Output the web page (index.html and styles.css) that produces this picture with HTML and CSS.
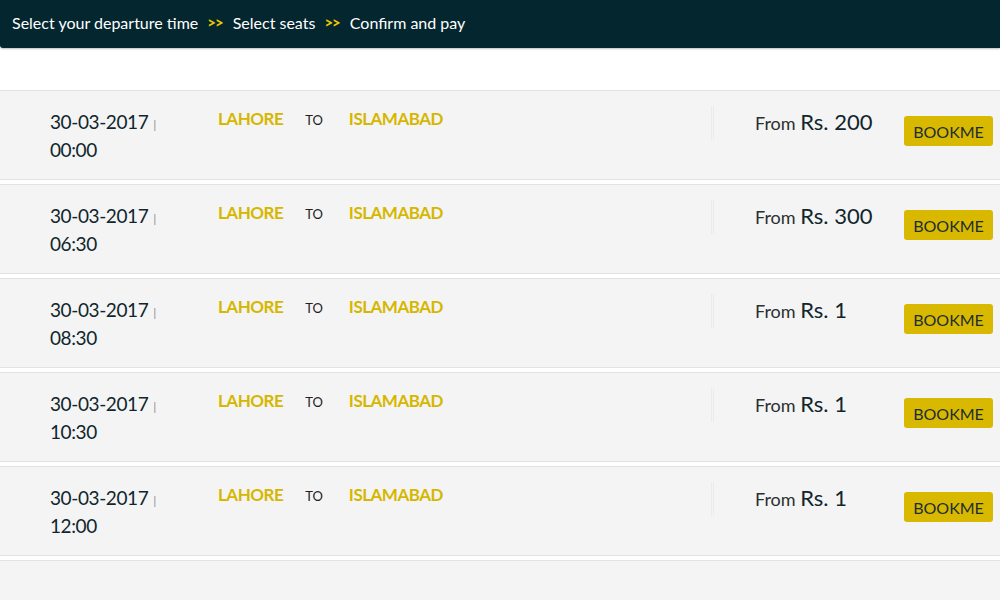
FILE: index.html
```html
<!DOCTYPE html>
<html lang="en">

<head>
    <meta charset="UTF-8">
    <meta name="viewport" content="width=device-width, initial-scale=1.0">
    <title>Select departure</title>
    <link rel="stylesheet" href="styles.css">
</head>

<body>
    <div class="steps">
        <span class="steps__item">Select your departure time</span>
        <span class="steps__sep">&gt;&gt;</span>
        <span class="steps__item">Select seats</span>
        <span class="steps__sep">&gt;&gt;</span>
        <span class="steps__item">Confirm and pay</span>
    </div>

    <ul class="trips">
        <li class="trip">
            <div class="trip__when">30-03-2017<span class="trip__bar">|</span><br>00:00</div>
            <div class="trip__route">
                <span class="trip__city">LAHORE</span>
                <span class="trip__to">TO</span>
                <span class="trip__city">ISLAMABAD</span>
            </div>
            <div class="trip__divider"></div>
            <div class="trip__price">From <b>Rs. 200</b></div>
            <button class="trip__book">BOOKME</button>
        </li>
        <li class="trip">
            <div class="trip__when">30-03-2017<span class="trip__bar">|</span><br>06:30</div>
            <div class="trip__route">
                <span class="trip__city">LAHORE</span>
                <span class="trip__to">TO</span>
                <span class="trip__city">ISLAMABAD</span>
            </div>
            <div class="trip__divider"></div>
            <div class="trip__price">From <b>Rs. 300</b></div>
            <button class="trip__book">BOOKME</button>
        </li>
        <li class="trip">
            <div class="trip__when">30-03-2017<span class="trip__bar">|</span><br>08:30</div>
            <div class="trip__route">
                <span class="trip__city">LAHORE</span>
                <span class="trip__to">TO</span>
                <span class="trip__city">ISLAMABAD</span>
            </div>
            <div class="trip__divider"></div>
            <div class="trip__price">From <b>Rs. 1</b></div>
            <button class="trip__book">BOOKME</button>
        </li>
        <li class="trip">
            <div class="trip__when">30-03-2017<span class="trip__bar">|</span><br>10:30</div>
            <div class="trip__route">
                <span class="trip__city">LAHORE</span>
                <span class="trip__to">TO</span>
                <span class="trip__city">ISLAMABAD</span>
            </div>
            <div class="trip__divider"></div>
            <div class="trip__price">From <b>Rs. 1</b></div>
            <button class="trip__book">BOOKME</button>
        </li>
        <li class="trip">
            <div class="trip__when">30-03-2017<span class="trip__bar">|</span><br>12:00</div>
            <div class="trip__route">
                <span class="trip__city">LAHORE</span>
                <span class="trip__to">TO</span>
                <span class="trip__city">ISLAMABAD</span>
            </div>
            <div class="trip__divider"></div>
            <div class="trip__price">From <b>Rs. 1</b></div>
            <button class="trip__book">BOOKME</button>
        </li>
        <li class="trip trip--empty"></li>
    </ul>
</body>

</html>
```

FILE: styles.css
```css
body {
    font-family: Lato, "Open Sans", sans-serif;
    margin: 0;
    background: #fff;
    color: #1c2e33;
    overflow: hidden;
}

*,
::after,
::before {
    box-sizing: border-box;
}

.steps {
    display: flex;
    align-items: center;
    gap: 9px;
    height: 48px;
    padding: 0 0 4px 12px;
    background: #03262f;
    border-bottom-left-radius: 3px;
    box-shadow: 0 1px 2px rgba(0, 0, 0, .25);
    color: #fff;
    font-size: 16px;
}

.steps__sep {
    color: #f0c800;
    font-weight: 900;
    font-size: 15px;
    letter-spacing: -1px;
    margin-right: 1px;
}

.trips {
    list-style: none;
    margin: 42px 0 0;
    padding: 0;
}

.trip {
    display: flex;
    align-items: flex-start;
    height: 90px;
    margin-bottom: 4px;
    padding-top: 17px;
    background: #f4f4f4;
    border-top: 1px solid #e2e2e2;
    border-bottom: 1px solid #e2e2e2;
}

.trip--empty {
    height: 60px;
}

.trip__when {
    width: 218px;
    padding-left: 50px;
    font-size: 19px;
    line-height: 28px;
    letter-spacing: -.4px;
    color: #10262c;
}

.trip__bar {
    margin-left: 5px;
    font-size: 12px;
    line-height: 0;
    color: #8a8f94;
}

.trip__route {
    display: flex;
    align-items: baseline;
    width: 493px;
    font-size: 17px;
}

.trip__city {
    color: #d6b700;
    font-weight: bold;
    letter-spacing: -.5px;
}

.trip__to {
    margin: 0 26px 0 22px;
    font-size: 13px;
    color: #222;
}

.trip__divider {
    width: 3px;
    height: 34px;
    margin-top: -2px;
    border-left: 1px solid #ebebeb;
    border-right: 1px solid #ebebeb;
}

.trip__price {
    width: 149px;
    margin-left: 41px;
    font-size: 18px;
    color: #2a2f30;
}

.trip__price b {
    font-weight: normal;
    font-size: 22px;
    color: #10262c;
}

.trip__book {
    margin-top: 8px;
    width: 89px;
    height: 30px;
    padding: 0;
    border: 0;
    border-radius: 3px;
    background: #d9b800;
    color: #1d2e33;
    font-family: inherit;
    font-size: 16px;
}
```
